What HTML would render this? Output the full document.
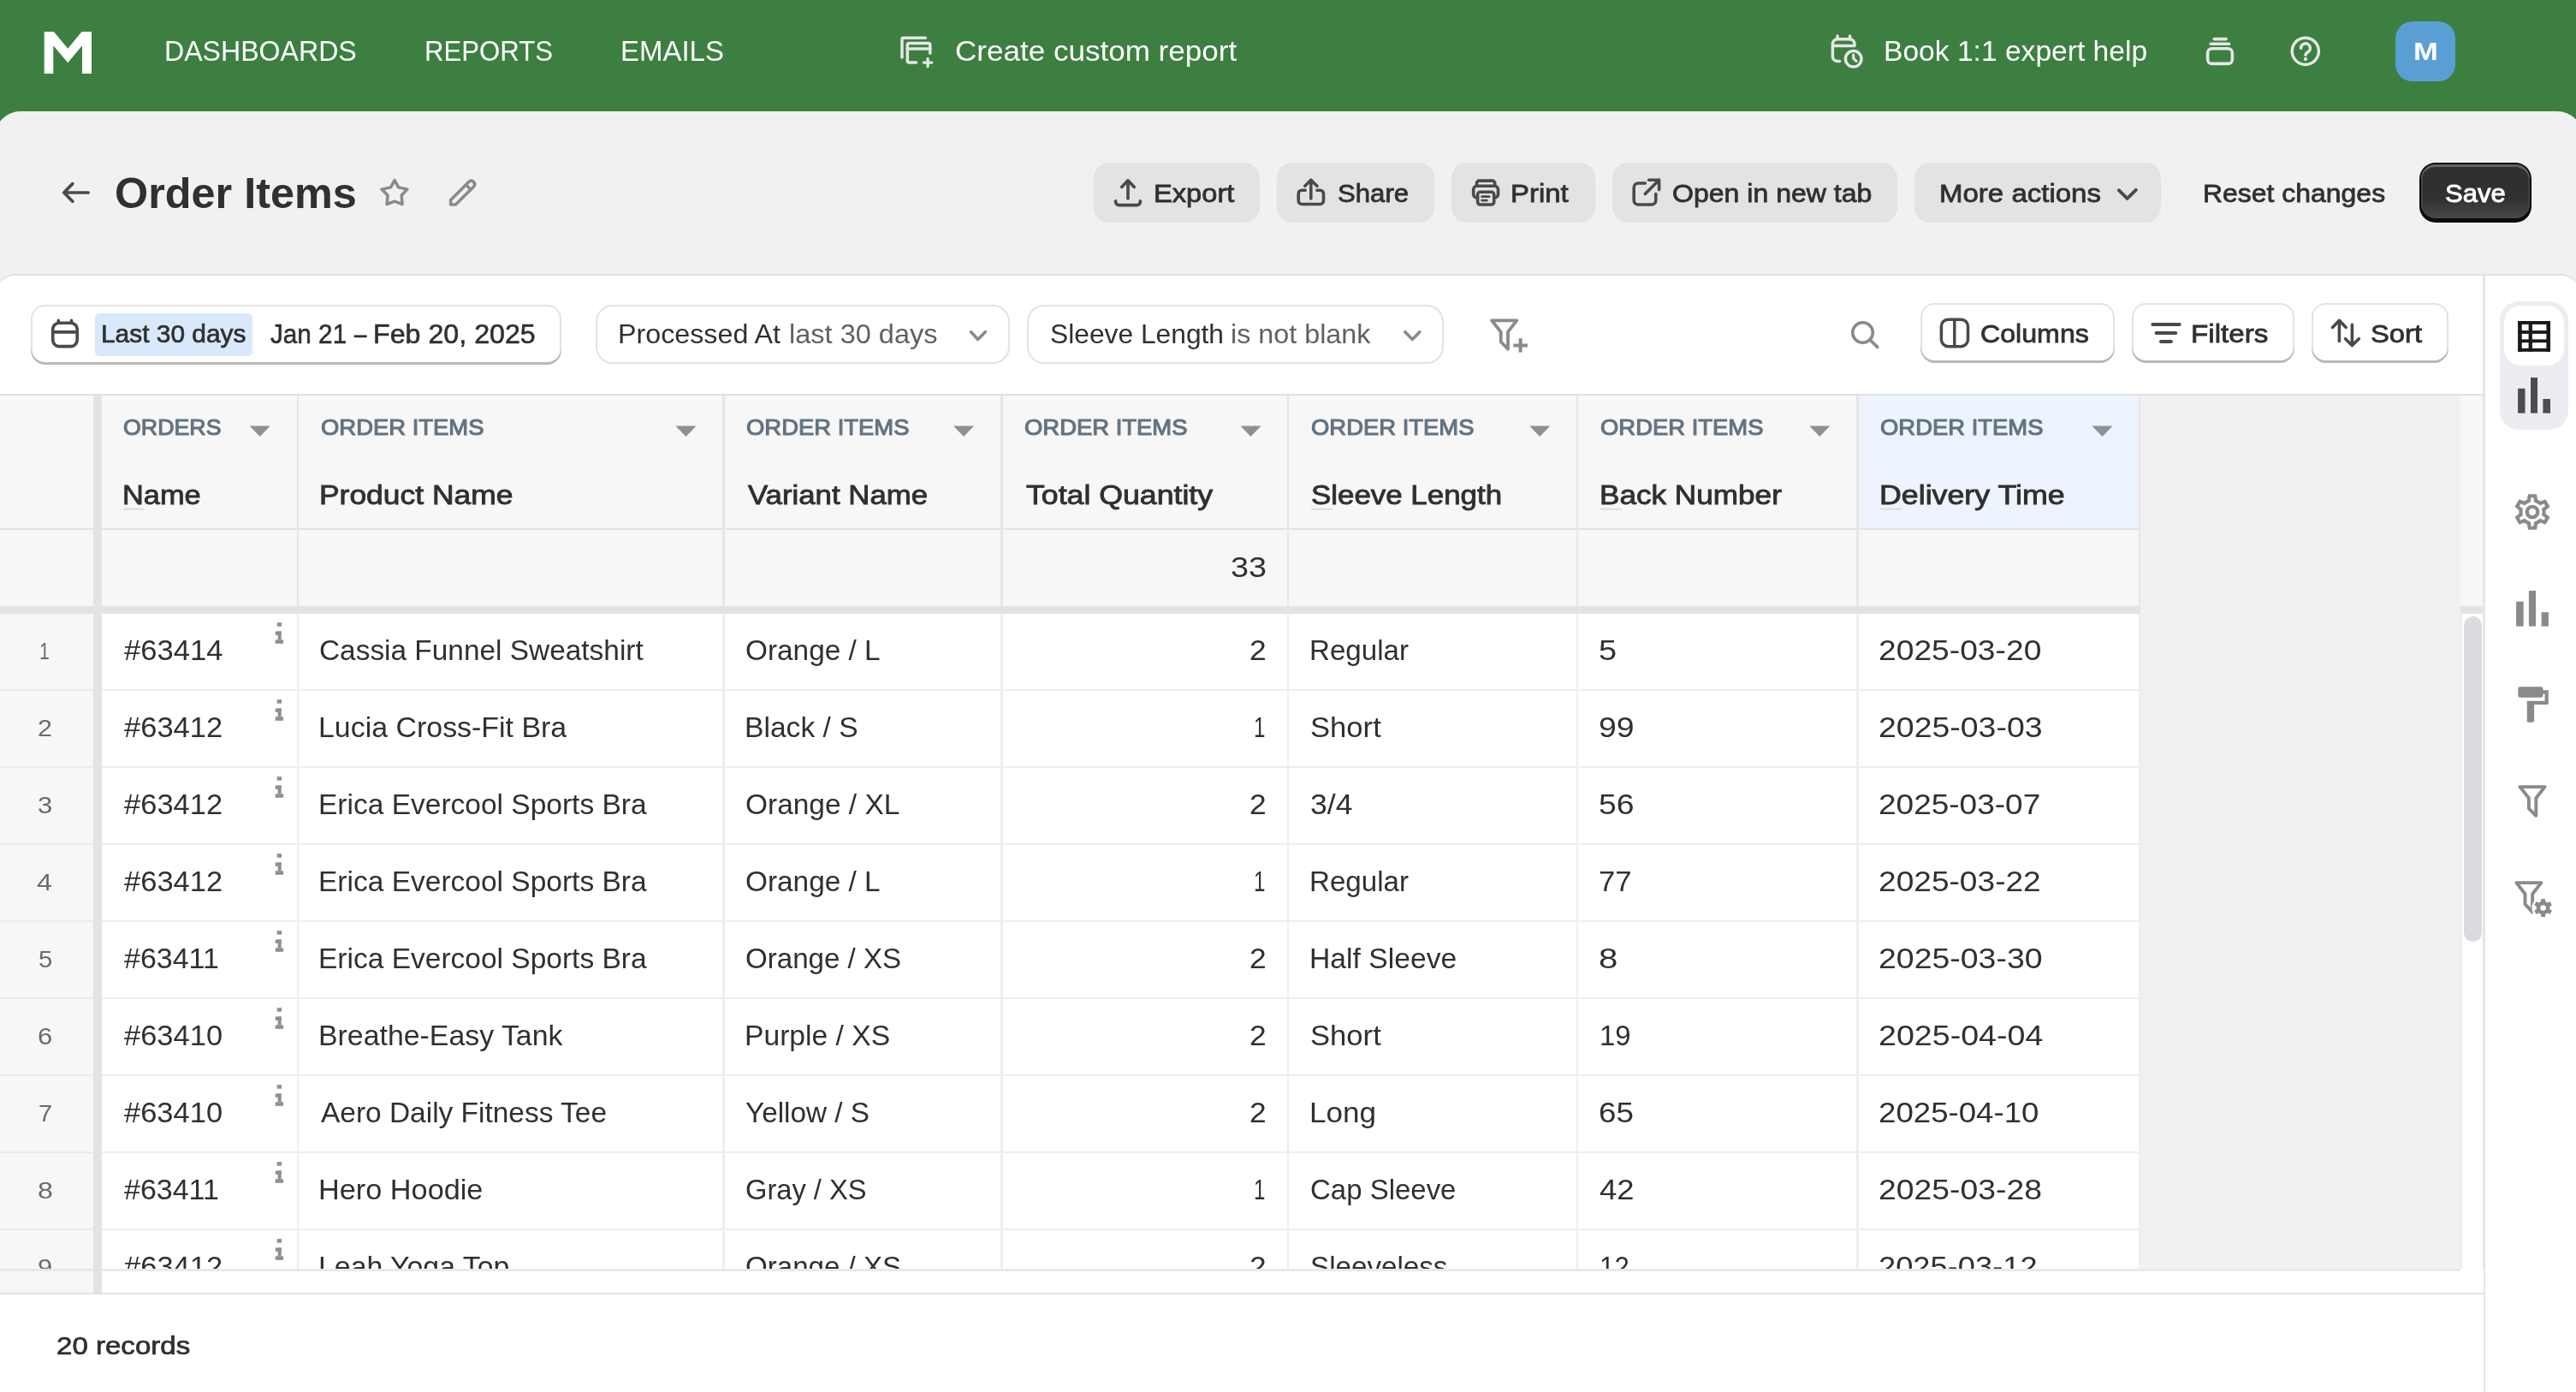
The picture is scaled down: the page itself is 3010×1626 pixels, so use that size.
<!DOCTYPE html>
<html><head><meta charset="utf-8"><title>Order Items</title>
<style>
html,body{margin:0;padding:0}
body{width:3010px;height:1626px;overflow:hidden;background:#3c7f40;font-family:"Liberation Sans",sans-serif;position:relative}
.t{position:absolute;white-space:pre;line-height:1;transform-origin:0 0}
.a{position:absolute;box-sizing:border-box}
.btn{position:absolute;box-sizing:border-box;top:190px;height:70px;background:#e3e3e3;border-radius:18px}
.obtn{position:absolute;box-sizing:border-box;background:#fff;border-radius:17px;box-shadow:inset 0 -3px 0 #b8b8b8,inset -2px 0 0 #e3e3e3,inset 2px 0 0 #e3e3e3,inset 0 2px 0 #e3e3e3}
.flt{position:absolute;box-sizing:border-box;top:356px;height:69px;background:#fff;border:2px solid #e3e3e3;border-radius:20px}
.vl{position:absolute;width:2px;background:#e9e9e9;top:462px;height:1020px}
.hl{position:absolute;height:2px;background:#ebebeb;left:0;width:2501px}
svg{position:absolute;overflow:visible}
</style></head><body>
<!-- main gray surface -->
<div class="a" id="main" style="left:-6px;top:130px;width:3024px;height:1496px;background:#f1f1f1;border-radius:30px 30px 0 0"></div>
<!--ICONS_TOP-->
<!-- action buttons -->
<div class="btn" style="left:1278px;width:194px"></div>
<div class="btn" style="left:1492px;width:184px"></div>
<div class="btn" style="left:1696px;width:168px"></div>
<div class="btn" style="left:1884px;width:333px"></div>
<div class="btn" style="left:2237px;width:288px"></div>
<div class="a" style="left:2827px;top:190px;width:131px;height:70px;border-radius:19px;background:#0b0b0b"></div>
<div class="a" style="left:2829px;top:191.5px;width:127px;height:63.5px;border-radius:17px;background:linear-gradient(#303030 0%,#303030 62%,#484848 100%);box-shadow:inset 0 3px 0 #626262,inset 1.5px 0 0 #4a4a4a,inset -1.5px 0 0 #4a4a4a"></div>
<!-- avatar -->
<div class="a" style="left:2799px;top:25px;width:70px;height:70px;border-radius:20px;background:#5a9fd4"></div>
<!-- card -->
<div class="a" id="card" style="left:-6px;top:320px;width:3022px;height:1306px;background:#fff;border-top:2px solid #e2e2e2;border-radius:24px 24px 0 0"></div>
<!-- toolbar -->
<div class="obtn" style="left:36px;top:356px;width:620px;height:70px"></div>
<div class="a" style="left:111px;top:366px;width:184px;height:50px;background:#d9e9fb;border-radius:5px"></div>
<div class="flt" style="left:696px;width:484px"></div>
<div class="flt" style="left:1200px;width:487px"></div>
<div class="obtn" style="left:2244px;top:354px;width:227px;height:70px"></div>
<div class="obtn" style="left:2491px;top:354px;width:190px;height:70px"></div>
<div class="obtn" style="left:2701px;top:354px;width:160px;height:70px"></div>
<!-- view switcher -->
<div class="a" style="left:2921px;top:352px;width:80px;height:150px;background:#ecedf2;border-radius:22px"></div>
<div class="a" style="left:2926px;top:357px;width:70px;height:70px;background:#fff;border-radius:20px"></div>
<!-- table backgrounds -->
<div class="a" style="left:0;top:460px;width:2902px;height:2px;background:#e1e1e1"></div>
<div class="a" style="left:0;top:462px;width:2902px;height:1020px;background:#f1f1f1"></div>
<div class="a" style="left:2875px;top:462px;width:27px;height:246px;background:#f7f7f7"></div>
<div class="a" style="left:2875px;top:717px;width:27px;height:770px;background:#fff;border-left:2px solid #ededed"></div>
<div class="a" style="left:0;top:462px;width:2499px;height:246px;background:#f7f7f7"></div>
<div class="a" style="left:2171.6px;top:462px;width:327.4px;height:155px;background:#edf4fd"></div>
<div class="a" style="left:0;top:717px;width:2499px;height:765px;background:#fff"></div>
<div class="a" style="left:0;top:462px;width:109px;height:1048px;background:#f7f7f7"></div>
<!-- horizontal lines -->
<div class="hl" style="top:617px;background:#e3e3e3"></div>
<div class="hl" style="top:804.8px;height:2.3px;background:#eeeeee"></div><div class="hl" style="top:804.8px;height:2.3px;width:109px;background:#ebebeb"></div><div class="hl" style="top:894.8px;height:2.3px;background:#eeeeee"></div><div class="hl" style="top:894.8px;height:2.3px;width:109px;background:#ebebeb"></div><div class="hl" style="top:984.8px;height:2.3px;background:#eeeeee"></div><div class="hl" style="top:984.8px;height:2.3px;width:109px;background:#ebebeb"></div><div class="hl" style="top:1074.8px;height:2.3px;background:#eeeeee"></div><div class="hl" style="top:1074.8px;height:2.3px;width:109px;background:#ebebeb"></div><div class="hl" style="top:1164.8px;height:2.3px;background:#eeeeee"></div><div class="hl" style="top:1164.8px;height:2.3px;width:109px;background:#ebebeb"></div><div class="hl" style="top:1254.8px;height:2.3px;background:#eeeeee"></div><div class="hl" style="top:1254.8px;height:2.3px;width:109px;background:#ebebeb"></div><div class="hl" style="top:1344.8px;height:2.3px;background:#eeeeee"></div><div class="hl" style="top:1344.8px;height:2.3px;width:109px;background:#ebebeb"></div><div class="hl" style="top:1434.8px;height:2.3px;background:#eeeeee"></div><div class="hl" style="top:1434.8px;height:2.3px;width:109px;background:#ebebeb"></div>
<!-- vertical column lines -->
<div class="a" style="left:347.1px;top:462px;width:2.4px;height:246px;background:#e6e6e6"></div>
<div class="a" style="left:347.1px;top:717px;width:2.4px;height:765px;background:#eeeeee"></div>
<div class="a" style="left:844.3px;top:462px;width:2.4px;height:246px;background:#e6e6e6"></div>
<div class="a" style="left:844.3px;top:717px;width:2.4px;height:765px;background:#eeeeee"></div>
<div class="a" style="left:1169.3px;top:462px;width:2.4px;height:246px;background:#e6e6e6"></div>
<div class="a" style="left:1169.3px;top:717px;width:2.4px;height:765px;background:#eeeeee"></div>
<div class="a" style="left:1504.1px;top:462px;width:2.4px;height:246px;background:#e6e6e6"></div>
<div class="a" style="left:1504.1px;top:717px;width:2.4px;height:765px;background:#eeeeee"></div>
<div class="a" style="left:1841.8px;top:462px;width:2.4px;height:246px;background:#e6e6e6"></div>
<div class="a" style="left:1841.8px;top:717px;width:2.4px;height:765px;background:#eeeeee"></div>
<div class="a" style="left:2169.2px;top:462px;width:2.4px;height:246px;background:#e6e6e6"></div>
<div class="a" style="left:2169.2px;top:717px;width:2.4px;height:765px;background:#eeeeee"></div>
<div class="a" style="left:2499px;top:462px;width:2.4px;height:246px;background:#e6e6e6"></div>
<div class="a" style="left:2499px;top:717px;width:2.4px;height:765px;background:#eeeeee"></div>
<!-- thick dividers -->
<div class="a" style="left:0;top:707.5px;width:2501px;height:9.5px;background:#e3e3e3"></div>
<div class="a" style="left:2875px;top:707.5px;width:27px;height:9.5px;background:#e3e3e3"></div>
<div class="a" style="left:109.3px;top:462px;width:9.6px;height:1048px;background:#e3e3e3"></div>
<!-- scrollbar thumb -->
<div class="a" style="left:2879px;top:720px;width:21px;height:380px;border-radius:11px;background:#dbdce0"></div>
<!-- side panel line -->
<div class="a" style="left:2901px;top:322px;width:3px;height:1304px;background:#e5e5e5"></div>
<svg width="3010" height="1626" viewBox="0 0 3010 1626" style="left:0;top:0">
<polygon fill="#8c9196" points="291.6,497.5 315.8,497.5 303.70000000000005,509.9"/>
<polygon fill="#8c9196" points="789.4,497.5 813.6,497.5 801.5,509.9"/>
<polygon fill="#8c9196" points="1114,497.5 1138.2,497.5 1126.1,509.9"/>
<polygon fill="#8c9196" points="1449.4,497.5 1473.6000000000001,497.5 1461.5,509.9"/>
<polygon fill="#8c9196" points="1787.1,497.5 1811.3,497.5 1799.1999999999998,509.9"/>
<polygon fill="#8c9196" points="2114.2,497.5 2138.3999999999996,497.5 2126.2999999999997,509.9"/>
<polygon fill="#8c9196" points="2444.4,497.5 2468.6,497.5 2456.5,509.9"/>
<rect x="144.1" y="593.7" width="24.9" height="2" fill="#dcdcdc"/>
<rect x="1532" y="593.7" width="24.9" height="2" fill="#dcdcdc"/>
<rect x="1870" y="593.7" width="24.9" height="2" fill="#dcdcdc"/>
<rect x="2197.3" y="593.7" width="24.9" height="2" fill="#dcdcdc"/>
<g fill="#8c9096" transform="translate(0,0)"><rect x="323.7" y="727.2" width="5.4" height="4.5"/><rect x="321.7" y="737.5" width="7" height="4.3"/><rect x="324.6" y="737.5" width="4.1" height="10"/><rect x="321.7" y="747.3" width="9.4" height="4.5"/></g>
<g fill="#8c9096" transform="translate(0,90)"><rect x="323.7" y="727.2" width="5.4" height="4.5"/><rect x="321.7" y="737.5" width="7" height="4.3"/><rect x="324.6" y="737.5" width="4.1" height="10"/><rect x="321.7" y="747.3" width="9.4" height="4.5"/></g>
<g fill="#8c9096" transform="translate(0,180)"><rect x="323.7" y="727.2" width="5.4" height="4.5"/><rect x="321.7" y="737.5" width="7" height="4.3"/><rect x="324.6" y="737.5" width="4.1" height="10"/><rect x="321.7" y="747.3" width="9.4" height="4.5"/></g>
<g fill="#8c9096" transform="translate(0,270)"><rect x="323.7" y="727.2" width="5.4" height="4.5"/><rect x="321.7" y="737.5" width="7" height="4.3"/><rect x="324.6" y="737.5" width="4.1" height="10"/><rect x="321.7" y="747.3" width="9.4" height="4.5"/></g>
<g fill="#8c9096" transform="translate(0,360)"><rect x="323.7" y="727.2" width="5.4" height="4.5"/><rect x="321.7" y="737.5" width="7" height="4.3"/><rect x="324.6" y="737.5" width="4.1" height="10"/><rect x="321.7" y="747.3" width="9.4" height="4.5"/></g>
<g fill="#8c9096" transform="translate(0,450)"><rect x="323.7" y="727.2" width="5.4" height="4.5"/><rect x="321.7" y="737.5" width="7" height="4.3"/><rect x="324.6" y="737.5" width="4.1" height="10"/><rect x="321.7" y="747.3" width="9.4" height="4.5"/></g>
<g fill="#8c9096" transform="translate(0,540)"><rect x="323.7" y="727.2" width="5.4" height="4.5"/><rect x="321.7" y="737.5" width="7" height="4.3"/><rect x="324.6" y="737.5" width="4.1" height="10"/><rect x="321.7" y="747.3" width="9.4" height="4.5"/></g>
<g fill="#8c9096" transform="translate(0,630)"><rect x="323.7" y="727.2" width="5.4" height="4.5"/><rect x="321.7" y="737.5" width="7" height="4.3"/><rect x="324.6" y="737.5" width="4.1" height="10"/><rect x="321.7" y="747.3" width="9.4" height="4.5"/></g>
<g fill="#8c9096" transform="translate(0,720)"><rect x="323.7" y="727.2" width="5.4" height="4.5"/><rect x="321.7" y="737.5" width="7" height="4.3"/><rect x="324.6" y="737.5" width="4.1" height="10"/><rect x="321.7" y="747.3" width="9.4" height="4.5"/></g>
</svg>

<div class="a" style="left:0;top:0;width:3010px;height:1626px;will-change:transform">
<div class="t" style="left:192.36px;top:42.90px;font-size:33.307px;font-weight:400;color:#ffffff;transform:scaleX(0.9640);">DASHBOARDS</div>
<div class="t" style="left:496.04px;top:42.90px;font-size:33.307px;font-weight:400;color:#ffffff;transform:scaleX(0.9350);">REPORTS</div>
<div class="t" style="left:725.09px;top:42.90px;font-size:33.307px;font-weight:400;color:#ffffff;transform:scaleX(0.9902);">EMAILS</div>
<div class="t" style="left:1115.50px;top:42.90px;font-size:33.307px;font-weight:400;color:#ffffff;transform:scaleX(1.0525);">Create custom report</div>
<div class="t" style="left:2201.04px;top:42.90px;font-size:33.307px;font-weight:400;color:#ffffff;transform:scaleX(1.0088);">Book 1:1 expert help</div>
<div class="t" style="left:2819.52px;top:43.90px;font-size:30.398px;font-weight:700;color:#ffffff;transform:scaleX(1.1381);">M</div>
<div class="t" style="left:134.30px;top:200.80px;font-size:50.339px;font-weight:700;color:#303030;transform:scaleX(1.0012);">Order Items</div>
<div class="t" style="left:1347.53px;top:211.01px;font-size:30.073px;font-weight:400;color:#303030;transform:scaleX(1.0856);-webkit-text-stroke:0.8px #303030;">Export</div>
<div class="t" style="left:1562.88px;top:211.01px;font-size:30.073px;font-weight:400;color:#303030;transform:scaleX(1.0362);-webkit-text-stroke:0.8px #303030;">Share</div>
<div class="t" style="left:1764.81px;top:211.01px;font-size:30.073px;font-weight:400;color:#303030;transform:scaleX(1.0946);-webkit-text-stroke:0.8px #303030;">Print</div>
<div class="t" style="left:1953.93px;top:211.01px;font-size:30.073px;font-weight:400;color:#303030;transform:scaleX(1.0662);-webkit-text-stroke:0.8px #303030;">Open in new tab</div>
<div class="t" style="left:2265.50px;top:211.01px;font-size:30.073px;font-weight:400;color:#303030;transform:scaleX(1.0981);-webkit-text-stroke:0.8px #303030;">More actions</div>
<div class="t" style="left:2573.67px;top:210.71px;font-size:30.073px;font-weight:400;color:#303030;transform:scaleX(1.0626);-webkit-text-stroke:0.8px #303030;">Reset changes</div>
<div class="t" style="left:2857.49px;top:211.91px;font-size:29.077px;font-weight:400;color:#ffffff;transform:scaleX(1.0665);-webkit-text-stroke:0.9px #ffffff;">Save</div>
<div class="t" style="left:117.80px;top:375.35px;font-size:29.847px;font-weight:400;color:#303030;transform:scaleX(1.0017);-webkit-text-stroke:0.7px #303030;">Last 30 days</div>
<div class="t" style="left:316.10px;top:374.75px;font-size:31.772px;font-weight:400;color:#303030;transform:scaleX(0.9346);-webkit-text-stroke:0.6px #303030;">Jan 21</div>
<div class="t" style="left:414.14px;top:374.75px;font-size:31.772px;font-weight:400;color:#303030;transform:scaleX(0.8145);-webkit-text-stroke:0.6px #303030;">–</div>
<div class="t" style="left:436.27px;top:374.75px;font-size:31.772px;font-weight:400;color:#303030;transform:scaleX(1.0137);-webkit-text-stroke:0.6px #303030;">Feb 20, 2025</div>
<div class="t" style="left:721.75px;top:376.00px;font-size:30.686px;font-weight:400;color:#303030;transform:scaleX(1.0511);">Processed At</div>
<div class="t" style="left:922.18px;top:376.00px;font-size:30.686px;font-weight:400;color:#616161;transform:scaleX(1.0604);">last 30 days</div>
<div class="t" style="left:1226.51px;top:376.00px;font-size:30.686px;font-weight:400;color:#303030;transform:scaleX(1.0352);">Sleeve Length</div>
<div class="t" style="left:1438.29px;top:376.00px;font-size:30.686px;font-weight:400;color:#616161;transform:scaleX(1.0536);">is not blank</div>
<div class="t" style="left:2314.03px;top:374.81px;font-size:30.073px;font-weight:400;color:#303030;transform:scaleX(1.0692);-webkit-text-stroke:0.8px #303030;">Columns</div>
<div class="t" style="left:2560.29px;top:374.81px;font-size:30.073px;font-weight:400;color:#303030;transform:scaleX(1.1045);-webkit-text-stroke:0.8px #303030;">Filters</div>
<div class="t" style="left:2770.33px;top:374.81px;font-size:30.073px;font-weight:400;color:#303030;transform:scaleX(1.0887);-webkit-text-stroke:0.8px #303030;">Sort</div>
<div class="t" style="left:143.94px;top:485.91px;font-size:26.075px;font-weight:400;color:#637381;transform:scaleX(1.0275);-webkit-text-stroke:1.1px #637381;">ORDERS</div>
<div class="t" style="left:374.52px;top:485.91px;font-size:26.075px;font-weight:400;color:#637381;transform:scaleX(1.0521);-webkit-text-stroke:1.1px #637381;">ORDER ITEMS</div>
<div class="t" style="left:872.12px;top:485.91px;font-size:26.075px;font-weight:400;color:#637381;transform:scaleX(1.0521);-webkit-text-stroke:1.1px #637381;">ORDER ITEMS</div>
<div class="t" style="left:1196.72px;top:485.91px;font-size:26.075px;font-weight:400;color:#637381;transform:scaleX(1.0521);-webkit-text-stroke:1.1px #637381;">ORDER ITEMS</div>
<div class="t" style="left:1532.02px;top:485.91px;font-size:26.075px;font-weight:400;color:#637381;transform:scaleX(1.0521);-webkit-text-stroke:1.1px #637381;">ORDER ITEMS</div>
<div class="t" style="left:1869.52px;top:485.91px;font-size:26.075px;font-weight:400;color:#637381;transform:scaleX(1.0521);-webkit-text-stroke:1.1px #637381;">ORDER ITEMS</div>
<div class="t" style="left:2196.92px;top:485.91px;font-size:26.075px;font-weight:400;color:#637381;transform:scaleX(1.0521);-webkit-text-stroke:1.1px #637381;">ORDER ITEMS</div>
<div class="t" style="left:143.06px;top:561.61px;font-size:32.056px;font-weight:400;color:#303030;transform:scaleX(1.0723);-webkit-text-stroke:0.9px #303030;">Name</div>
<div class="t" style="left:373.09px;top:561.61px;font-size:32.056px;font-weight:400;color:#303030;transform:scaleX(1.1050);-webkit-text-stroke:0.9px #303030;">Product Name</div>
<div class="t" style="left:873.83px;top:561.61px;font-size:32.056px;font-weight:400;color:#303030;transform:scaleX(1.0853);-webkit-text-stroke:0.9px #303030;">Variant Name</div>
<div class="t" style="left:1198.60px;top:561.61px;font-size:32.056px;font-weight:400;color:#303030;transform:scaleX(1.1129);-webkit-text-stroke:0.9px #303030;">Total Quantity</div>
<div class="t" style="left:1531.73px;top:561.61px;font-size:32.056px;font-weight:400;color:#303030;transform:scaleX(1.0885);-webkit-text-stroke:0.9px #303030;">Sleeve Length</div>
<div class="t" style="left:1868.51px;top:561.61px;font-size:32.056px;font-weight:400;color:#303030;transform:scaleX(1.0964);-webkit-text-stroke:0.9px #303030;">Back Number</div>
<div class="t" style="left:2195.77px;top:561.61px;font-size:32.056px;font-weight:400;color:#303030;transform:scaleX(1.1158);-webkit-text-stroke:0.9px #303030;">Delivery Time</div>
<div class="t" style="left:1437.87px;top:646.00px;font-size:33.307px;font-weight:400;color:#303030;transform:scaleX(1.1338);">33</div>
<div class="t" style="left:45.63px;top:746.80px;font-size:27.183px;font-weight:400;color:#6b6b6b;transform:scaleX(0.7833);">1</div>
<div class="t" style="left:144.90px;top:743.00px;font-size:33.307px;font-weight:400;color:#303030;transform:scaleX(1.0405);">#63414</div>
<div class="t" style="left:372.78px;top:743.00px;font-size:33.307px;font-weight:400;color:#303030;transform:scaleX(1.0031);">Cassia Funnel Sweatshirt</div>
<div class="t" style="left:870.69px;top:743.00px;font-size:33.307px;font-weight:400;color:#303030;transform:scaleX(1.0016);">Orange / L</div>
<div class="t" style="left:1460.02px;top:743.00px;font-size:33.307px;font-weight:400;color:#303030;transform:scaleX(1.0636);">2</div>
<div class="t" style="left:1529.78px;top:743.00px;font-size:33.307px;font-weight:400;color:#303030;transform:scaleX(0.9948);">Regular</div>
<div class="t" style="left:1868.26px;top:743.00px;font-size:33.307px;font-weight:400;color:#303030;transform:scaleX(1.1401);">5</div>
<div class="t" style="left:2195.43px;top:743.00px;font-size:33.307px;font-weight:400;color:#303030;transform:scaleX(1.1176);">2025-03-20</div>
<div class="t" style="left:43.88px;top:836.80px;font-size:27.183px;font-weight:400;color:#6b6b6b;transform:scaleX(1.1231);">2</div>
<div class="t" style="left:144.90px;top:833.00px;font-size:33.307px;font-weight:400;color:#303030;transform:scaleX(1.0362);">#63412</div>
<div class="t" style="left:371.71px;top:833.00px;font-size:33.307px;font-weight:400;color:#303030;transform:scaleX(1.0185);">Lucia Cross-Fit Bra</div>
<div class="t" style="left:869.54px;top:833.00px;font-size:33.307px;font-weight:400;color:#303030;transform:scaleX(1.0097);">Black / S</div>
<div class="t" style="left:1464.66px;top:833.00px;font-size:33.307px;font-weight:400;color:#303030;transform:scaleX(0.7260);">1</div>
<div class="t" style="left:1530.69px;top:833.00px;font-size:33.307px;font-weight:400;color:#303030;transform:scaleX(1.0399);">Short</div>
<div class="t" style="left:1868.39px;top:833.00px;font-size:33.307px;font-weight:400;color:#303030;transform:scaleX(1.1218);">99</div>
<div class="t" style="left:2195.42px;top:833.00px;font-size:33.307px;font-weight:400;color:#303030;transform:scaleX(1.1248);">2025-03-03</div>
<div class="t" style="left:43.86px;top:926.80px;font-size:27.183px;font-weight:400;color:#6b6b6b;transform:scaleX(1.1385);">3</div>
<div class="t" style="left:144.90px;top:923.00px;font-size:33.307px;font-weight:400;color:#303030;transform:scaleX(1.0362);">#63412</div>
<div class="t" style="left:371.75px;top:923.00px;font-size:33.307px;font-weight:400;color:#303030;transform:scaleX(1.0063);">Erica Evercool Sports Bra</div>
<div class="t" style="left:870.69px;top:923.00px;font-size:33.307px;font-weight:400;color:#303030;transform:scaleX(1.0045);">Orange / XL</div>
<div class="t" style="left:1460.02px;top:923.00px;font-size:33.307px;font-weight:400;color:#303030;transform:scaleX(1.0636);">2</div>
<div class="t" style="left:1531.43px;top:923.00px;font-size:33.307px;font-weight:400;color:#303030;transform:scaleX(1.0679);">3/4</div>
<div class="t" style="left:1868.29px;top:923.00px;font-size:33.307px;font-weight:400;color:#303030;transform:scaleX(1.1222);">56</div>
<div class="t" style="left:2195.44px;top:923.00px;font-size:33.307px;font-weight:400;color:#303030;transform:scaleX(1.1110);">2025-03-07</div>
<div class="t" style="left:43.46px;top:1016.80px;font-size:27.183px;font-weight:400;color:#6b6b6b;transform:scaleX(1.1840);">4</div>
<div class="t" style="left:144.90px;top:1013.00px;font-size:33.307px;font-weight:400;color:#303030;transform:scaleX(1.0362);">#63412</div>
<div class="t" style="left:371.75px;top:1013.00px;font-size:33.307px;font-weight:400;color:#303030;transform:scaleX(1.0063);">Erica Evercool Sports Bra</div>
<div class="t" style="left:870.69px;top:1013.00px;font-size:33.307px;font-weight:400;color:#303030;transform:scaleX(1.0016);">Orange / L</div>
<div class="t" style="left:1464.66px;top:1013.00px;font-size:33.307px;font-weight:400;color:#303030;transform:scaleX(0.7260);">1</div>
<div class="t" style="left:1529.78px;top:1013.00px;font-size:33.307px;font-weight:400;color:#303030;transform:scaleX(0.9948);">Regular</div>
<div class="t" style="left:1868.42px;top:1013.00px;font-size:33.307px;font-weight:400;color:#303030;transform:scaleX(1.0406);">77</div>
<div class="t" style="left:2195.43px;top:1013.00px;font-size:33.307px;font-weight:400;color:#303030;transform:scaleX(1.1140);">2025-03-22</div>
<div class="t" style="left:44.52px;top:1106.80px;font-size:27.183px;font-weight:400;color:#6b6b6b;transform:scaleX(1.0769);">5</div>
<div class="t" style="left:144.90px;top:1103.00px;font-size:33.307px;font-weight:400;color:#303030;transform:scaleX(1.0206);">#63411</div>
<div class="t" style="left:371.75px;top:1103.00px;font-size:33.307px;font-weight:400;color:#303030;transform:scaleX(1.0063);">Erica Evercool Sports Bra</div>
<div class="t" style="left:870.71px;top:1103.00px;font-size:33.307px;font-weight:400;color:#303030;transform:scaleX(0.9939);">Orange / XS</div>
<div class="t" style="left:1460.02px;top:1103.00px;font-size:33.307px;font-weight:400;color:#303030;transform:scaleX(1.0636);">2</div>
<div class="t" style="left:1529.73px;top:1103.00px;font-size:33.307px;font-weight:400;color:#303030;transform:scaleX(1.0117);">Half Sleeve</div>
<div class="t" style="left:1868.37px;top:1103.00px;font-size:33.307px;font-weight:400;color:#303030;transform:scaleX(1.2057);">8</div>
<div class="t" style="left:2195.42px;top:1103.00px;font-size:33.307px;font-weight:400;color:#303030;transform:scaleX(1.1248);">2025-03-30</div>
<div class="t" style="left:44.06px;top:1196.80px;font-size:27.183px;font-weight:400;color:#6b6b6b;transform:scaleX(1.1385);">6</div>
<div class="t" style="left:144.90px;top:1193.00px;font-size:33.307px;font-weight:400;color:#303030;transform:scaleX(1.0355);">#63410</div>
<div class="t" style="left:371.72px;top:1193.00px;font-size:33.307px;font-weight:400;color:#303030;transform:scaleX(1.0167);">Breathe-Easy Tank</div>
<div class="t" style="left:869.54px;top:1193.00px;font-size:33.307px;font-weight:400;color:#303030;transform:scaleX(1.0100);">Purple / XS</div>
<div class="t" style="left:1460.02px;top:1193.00px;font-size:33.307px;font-weight:400;color:#303030;transform:scaleX(1.0636);">2</div>
<div class="t" style="left:1530.69px;top:1193.00px;font-size:33.307px;font-weight:400;color:#303030;transform:scaleX(1.0399);">Short</div>
<div class="t" style="left:1868.99px;top:1193.00px;font-size:33.307px;font-weight:400;color:#303030;transform:scaleX(0.9891);">19</div>
<div class="t" style="left:2195.41px;top:1193.00px;font-size:33.307px;font-weight:400;color:#303030;transform:scaleX(1.1293);">2025-04-04</div>
<div class="t" style="left:44.54px;top:1286.80px;font-size:27.183px;font-weight:400;color:#6b6b6b;transform:scaleX(1.0615);">7</div>
<div class="t" style="left:144.90px;top:1283.00px;font-size:33.307px;font-weight:400;color:#303030;transform:scaleX(1.0355);">#63410</div>
<div class="t" style="left:374.50px;top:1283.00px;font-size:33.307px;font-weight:400;color:#303030;transform:scaleX(1.0045);">Aero Daily Fitness Tee</div>
<div class="t" style="left:871.35px;top:1283.00px;font-size:33.307px;font-weight:400;color:#303030;transform:scaleX(1.0005);">Yellow / S</div>
<div class="t" style="left:1460.02px;top:1283.00px;font-size:33.307px;font-weight:400;color:#303030;transform:scaleX(1.0636);">2</div>
<div class="t" style="left:1529.62px;top:1283.00px;font-size:33.307px;font-weight:400;color:#303030;transform:scaleX(1.0540);">Long</div>
<div class="t" style="left:1868.30px;top:1283.00px;font-size:33.307px;font-weight:400;color:#303030;transform:scaleX(1.1055);">65</div>
<div class="t" style="left:2195.46px;top:1283.00px;font-size:33.307px;font-weight:400;color:#303030;transform:scaleX(1.1003);">2025-04-10</div>
<div class="t" style="left:43.52px;top:1376.80px;font-size:27.183px;font-weight:400;color:#6b6b6b;transform:scaleX(1.1846);">8</div>
<div class="t" style="left:144.90px;top:1373.00px;font-size:33.307px;font-weight:400;color:#303030;transform:scaleX(1.0206);">#63411</div>
<div class="t" style="left:371.68px;top:1373.00px;font-size:33.307px;font-weight:400;color:#303030;transform:scaleX(1.0294);">Hero Hoodie</div>
<div class="t" style="left:870.64px;top:1373.00px;font-size:33.307px;font-weight:400;color:#303030;transform:scaleX(0.9801);">Gray / XS</div>
<div class="t" style="left:1464.66px;top:1373.00px;font-size:33.307px;font-weight:400;color:#303030;transform:scaleX(0.7260);">1</div>
<div class="t" style="left:1530.81px;top:1373.00px;font-size:33.307px;font-weight:400;color:#303030;transform:scaleX(0.9902);">Cap Sleeve</div>
<div class="t" style="left:1869.36px;top:1373.00px;font-size:33.307px;font-weight:400;color:#303030;transform:scaleX(1.0961);">42</div>
<div class="t" style="left:2195.42px;top:1373.00px;font-size:33.307px;font-weight:400;color:#303030;transform:scaleX(1.1212);">2025-03-28</div>
<div class="t" style="left:44.06px;top:1466.80px;font-size:27.183px;font-weight:400;color:#6b6b6b;transform:scaleX(1.1385);">9</div>
<div class="t" style="left:144.90px;top:1463.00px;font-size:33.307px;font-weight:400;color:#303030;transform:scaleX(1.0362);">#63412</div>
<div class="t" style="left:371.72px;top:1463.00px;font-size:33.307px;font-weight:400;color:#303030;transform:scaleX(1.0163);">Leah Yoga Top</div>
<div class="t" style="left:870.71px;top:1463.00px;font-size:33.307px;font-weight:400;color:#303030;transform:scaleX(0.9939);">Orange / XS</div>
<div class="t" style="left:1460.02px;top:1463.00px;font-size:33.307px;font-weight:400;color:#303030;transform:scaleX(1.0636);">2</div>
<div class="t" style="left:1530.76px;top:1463.00px;font-size:33.307px;font-weight:400;color:#303030;transform:scaleX(0.9965);">Sleeveless</div>
<div class="t" style="left:1869.12px;top:1463.00px;font-size:33.307px;font-weight:400;color:#303030;transform:scaleX(0.9389);">12</div>
<div class="t" style="left:2195.48px;top:1463.00px;font-size:33.307px;font-weight:400;color:#303030;transform:scaleX(1.0895);">2025-03-12</div>
</div>
<!-- bottom overlay (clips row 9) -->
<div class="a" style="left:0;top:1482px;width:2875px;height:3px;background:#e9e9e9"></div>
<div class="a" style="left:0;top:1485px;width:2902px;height:25px;background:#fff"></div>
<div class="a" style="left:2875px;top:1482px;width:27px;height:3px;background:#fff"></div>
<div class="a" style="left:0;top:1485px;width:109px;height:25px;background:#f7f7f7"></div>
<div class="a" style="left:109.3px;top:1482px;width:9.6px;height:28px;background:#e3e3e3"></div>
<div class="a" style="left:0;top:1510px;width:2902px;height:2px;background:#e1e1e1"></div>
<div class="a" style="left:0;top:1512px;width:2902px;height:114px;background:#fff"></div>
<div class="a" style="left:0;top:0;width:3010px;height:1626px;will-change:transform">
<div class="t" style="left:65.95px;top:1557.95px;font-size:28.773px;font-weight:400;color:#303030;transform:scaleX(1.1495);-webkit-text-stroke:0.7px #303030;">20 records</div>
</div>
<svg width="3010" height="1626" viewBox="0 0 3010 1626" style="left:0;top:0" fill="none" stroke-linecap="round" stroke-linejoin="round">
<!-- logo M -->
<polygon fill="#fff" points="51.7,86.1 51.7,37 62.8,37 79.3,56.8 95.5,37 107,37 107,86.1 96,86.1 96,53.3 79.3,73.2 62.3,53.3 62.3,86.1"/>
<!-- create report icon -->
<g stroke="#e6e6e6" stroke-width="3.5">
<path d="M1081.4,44.2 H1055.5 a1.5,1.5 0 0 0 -1.5,1.5 V67.1"/>
<path d="M1086.8,62.3 V52.5 a2,2 0 0 0 -2,-2 H1062.3 a2,2 0 0 0 -2,2 V71.1 a2,2 0 0 0 2,2 H1070.6"/>
<path d="M1060.3,56.9 H1086.8"/>
<path d="M1079.4,73.1 H1088.8 M1084.1,68.5 V77.7" stroke-width="3.3"/>
</g>
<!-- book icon -->
<g stroke="#e6e6e6" stroke-width="3.5">
<path d="M2149.6,71.4 h-2.5 a5.7,5.7 0 0 1 -5.7,-5.7 V51.4 a5.7,5.7 0 0 1 5.7,-5.7 h14.2 a5.7,5.7 0 0 1 5.7,5.7 v2.1 H2141.4"/>
<path d="M2147,41.9 V45.7 M2161.6,41.9 V45.7"/>
<circle cx="2165.7" cy="68.8" r="9.3"/>
<path d="M2165.7,64.1 V68.3 L2169,71.4" stroke-width="3.2"/>
</g>
<!-- stack icon -->
<g stroke="#e6e6e6" stroke-width="3.6">
<path d="M2587.2,45.6 H2601.1 M2583.2,51.25 H2604.7"/>
<rect x="2579.6" y="56.7" width="28.8" height="17.7" rx="5" ry="5"/>
</g>
<!-- help icon -->
<g stroke="#e6e6e6" stroke-width="3.5">
<circle cx="2693.8" cy="59.85" r="15.6"/>
<path d="M2688.6,56.2 a5.4,5.4 0 1 1 8,4.8 c-1.8,1 -2.6,1.7 -2.6,3.2"/>
<circle cx="2694" cy="68.9" r="2.2" fill="#e6e6e6" stroke="none"/>
</g>
<!-- back arrow -->
<path d="M103.1,225 H74.9 M84.8,214.6 L74.7,225 L84.8,235.3" stroke="#4a4a4a" stroke-width="3.7"/>
<!-- star -->
<polygon points="461.1,210.5 465.6,218.9 475.9,221.1 469.1,228.2 470.2,238.5 461.1,235.2 452,238.5 453.1,228.2 446,221.1 456.6,218.9" stroke="#8a8a8a" stroke-width="3.5"/>
<!-- pencil -->
<g stroke="#8a8a8a" stroke-width="3.5">
<path d="M526.6,233.7 L548.2,212.1 A4,4 0 0 1 553.8,217.7 L532.4,239.1 H526.6 Z"/>
<path d="M544.4,215.8 L550.1,221.5"/>
</g>
<!-- export -->
<g stroke="#4a4a4a" stroke-width="3.6">
<path d="M1318,211.3 V232 M1310.7,218.4 L1318,210.8 L1325.3,218.4"/>
<path d="M1303.6,234.7 V235.6 a4,4 0 0 0 4,4 H1328.4 a4,4 0 0 0 4,-4 V234.7"/>
</g>
<!-- share -->
<g stroke="#4a4a4a" stroke-width="3.6">
<path d="M1531.8,211.3 V232 M1524.8,217.3 L1531.8,210.2 L1538.9,217.3"/>
<path d="M1525.3,222.2 H1521.2 a4,4 0 0 0 -4,4 V234.5 a4,4 0 0 0 4,4 H1542.5 a4,4 0 0 0 4,-4 V226.2 a4,4 0 0 0 -4,-4 H1538.9"/>
</g>
<!-- print -->
<g stroke="#4a4a4a" stroke-width="3.6">
<path d="M1725.5,217.3 V214.1 a3,3 0 0 1 3,-3 H1743.7 a3,3 0 0 1 3,3 V217.3"/>
<path d="M1726.6,230.9 H1725.7 a4,4 0 0 1 -4,-4 V221.3 a4,4 0 0 1 4,-4 H1746.5 a4,4 0 0 1 4,4 V226.9 a4,4 0 0 1 -4,4 H1745.7"/>
<rect x="1726.6" y="224.3" width="19.1" height="14.7" rx="3" ry="3"/>
<path d="M1731.5,229.6 H1740.2 M1731.5,234.1 H1737.5" stroke-width="2.6"/>
</g>
<!-- open in new tab -->
<g stroke="#4a4a4a" stroke-width="3.6">
<path d="M1922.3,214 H1914.2 a5,5 0 0 0 -5,5 V234 a5,5 0 0 0 5,5 H1929.8 a5,5 0 0 0 5,-5 V226.5"/>
<path d="M1922.3,226.5 L1938.6,210.2 M1926.6,210.2 H1938.6 V221.6"/>
</g>
<!-- more actions chevron -->
<path d="M2475.8,222.2 L2485.6,231.9 L2495.8,221.9" stroke="#4a4a4a" stroke-width="3.9"/>
<!-- calendar -->
<g stroke="#4a4a4a" stroke-width="3.6">
<rect x="61.7" y="377.2" width="28.5" height="27.4" rx="7.5" ry="7.5"/>
<path d="M61.7,387.9 H90.2 M68.3,374.4 V377.2 M83.5,374.4 V377.2"/>
</g>
<!-- filter chevrons -->
<path d="M1134.6,387.7 L1142.7,396.4 L1151.4,387.7" stroke="#8a8a8a" stroke-width="3.6"/>
<path d="M1641.8,387.7 L1650.3,396.4 L1658.8,387.7" stroke="#8a8a8a" stroke-width="3.6"/>
<!-- filter+ -->
<g stroke="#8a8a8a" stroke-width="3.8">
<polygon points="1743.1,374.4 1772.3,374.4 1762,387.7 1762,407.8 1753.7,399.2 1753.7,387.7"/>
<path d="M1768.3,403.4 H1784.9 M1776.6,395.2 V411.6" stroke-width="4" stroke-linecap="butt"/>
</g>
<!-- search -->
<g stroke="#8a8a8a" stroke-width="3.6">
<circle cx="2176.55" cy="388.5" r="11.8"/>
<path d="M2185.4,397.2 L2193.7,405.4"/>
</g>
<!-- columns -->
<g stroke="#4a4a4a" stroke-width="3.5">
<rect x="2268.4" y="373.2" width="31.1" height="31.5" rx="8" ry="8"/>
<path d="M2283.8,373.2 V404.7"/>
</g>
<!-- filters -->
<path d="M2515.3,379 H2546.8 M2519.5,389 H2542.3 M2524.9,399 H2537" stroke="#4a4a4a" stroke-width="3.8"/>
<!-- sort -->
<g stroke="#4a4a4a" stroke-width="3.6">
<path d="M2733.4,374.6 V398.5 M2725.5,382.4 L2733.4,374.3 L2741.2,382.4"/>
<path d="M2748.4,379.2 V403.3 M2740.5,395.7 L2748.4,403.6 L2756.3,395.7"/>
</g>
<!-- table icon -->
<g fill="#1a1a1a" stroke="none">
<rect x="2942.1" y="375" width="4.6" height="35.8"/>
<rect x="2954.6" y="375" width="4.3" height="35.8"/>
<rect x="2975.4" y="375" width="4.6" height="35.8"/>
<rect x="2942.1" y="375" width="37.9" height="3.9"/>
<rect x="2942.1" y="386.1" width="37.9" height="3.8"/>
<rect x="2942.1" y="396.4" width="37.9" height="3.8"/>
<rect x="2942.1" y="406.9" width="37.9" height="3.9"/>
</g>
<!-- bar chart (switcher) -->
<g fill="#4d4d4d" stroke="none">
<rect x="2942.1" y="453.8" width="8.4" height="28.8"/>
<rect x="2957" y="441" width="8" height="41.6"/>
<rect x="2971.4" y="466" width="8.6" height="16.6"/>
</g>
<!-- bar chart (side) -->
<g fill="#8a8a8a" stroke="none">
<rect x="2940.1" y="702.6" width="8.6" height="29"/>
<rect x="2954.9" y="690" width="8.2" height="41.6"/>
<rect x="2969.6" y="715.1" width="8.3" height="16.5"/>
</g>
<!-- funnel (side) -->
<polygon points="2944.4,919.1 2973.6,919.1 2963.3,932.2 2963.3,952.8 2954.9,944.4 2954.9,932.2" stroke="#8a8a8a" stroke-width="3.9"/>
<!-- funnel + gear (side) -->
<polygon points="2940.4,1031.1 2969.4,1031.1 2959.1,1044.2 2959.1,1065.4 2950.5,1056.1 2950.5,1044.2" stroke="#8a8a8a" stroke-width="3.9"/>
<circle cx="2971.6" cy="1060.5" r="13.2" fill="#fff" stroke="none"/>
<g fill="#8a8a8a" stroke="none" transform="translate(2971.6,1060.5)">
<circle r="7.9"/>
<rect x="-2.4" y="-10.6" width="4.8" height="21.2"/>
<rect x="-2.4" y="-10.6" width="4.8" height="21.2" transform="rotate(60)"/>
<rect x="-2.4" y="-10.6" width="4.8" height="21.2" transform="rotate(120)"/>
<circle r="3.3" fill="#fff"/>
</g>
</svg>
<!-- material icons: gear, paint roller -->
<svg width="50" height="50" viewBox="0 0 24 24" style="left:2933.9px;top:572.8px" fill="#8a8a8a"><path d="M19.43 12.98c.04-.32.07-.64.07-.98 0-.34-.03-.66-.07-.98l2.11-1.65c.19-.15.24-.42.12-.64l-2-3.46c-.09-.16-.26-.25-.44-.25-.06 0-.12.01-.17.03l-2.49 1c-.52-.4-1.08-.73-1.69-.98l-.38-2.650C14.46 2.18 14.25 2 14 2h-4c-.25 0-.46.18-.49.42l-.38 2.650c-.61.25-1.17.59-1.69.98l-2.490-1c-.06-.02-.12-.03-.18-.03-.17 0-.34.09-.43.25l-2 3.460c-.13.22-.07.49.12.64l2.110 1.650c-.04.32-.07.65-.07.98 0 .33.03.66.07.98l-2.110 1.650c-.19.15-.24.42-.12.64l2 3.460c.09.16.26.25.44.25.06 0 .12-.01.17-.03l2.490-1c.52.4 1.080.73 1.690.98l.38 2.650c.03.24.24.42.49.42h4c.25 0 .46-.18.49-.42l.38-2.650c.61-.25 1.170-.59 1.690-.98l2.490 1c.06.02.12.03.18.03.17 0 .34-.09.43-.25l2-3.460c.12-.22.07-.49-.12-.64l-2.110-1.650zm-1.980-1.710c.04.31.05.52.05.73 0 .21-.02.43-.05.73l-.14 1.130.89.7 1.080.84-.7 1.210-1.270-.51-1.040-.42-.9.68c-.43.32-.84.56-1.250.73l-1.060.43-.16 1.130-.2 1.350h-1.400l-.19-1.350-.16-1.130-1.060-.43c-.43-.18-.83-.41-1.230-.71l-.91-.7-1.060.43-1.270.51-.7-1.210 1.080-.84.89-.7-.14-1.130c-.03-.31-.05-.54-.05-.74s.02-.43.05-.73l.14-1.130-.89-.7-1.080-.84.7-1.210 1.270.51 1.040.42.9-.68c.43-.32.84-.56 1.250-.73l1.060-.43.16-1.130.2-1.350h1.390l.19 1.350.16 1.130 1.060.43c.43.18.83.41 1.230.71l.91.7 1.060-.43 1.270-.51.7 1.210-1.070.85-.89.7.14 1.130zM12 8c-2.210 0-4 1.790-4 4s1.790 4 4 4 4-1.790 4-4-1.790-4-4-4zm0 6c-1.100 0-2-.9-2-2s.9-2 2-2 2 .9 2 2-.9 2-2 2z"/></svg>
<svg width="50" height="50" viewBox="0 0 24 24" style="left:2933.9px;top:798px" fill="#8a8a8a"><path d="M18 4V3c0-.55-.45-1-1-1H5c-.55 0-1 .45-1 1v4c0 .55.45 1 1 1h12c.55 0 1-.45 1-1V6h1v4H9v11c0 .55.45 1 1 1h2c.55 0 1-.45 1-1v-9h8V4h-3z"/></svg>

</body></html>
